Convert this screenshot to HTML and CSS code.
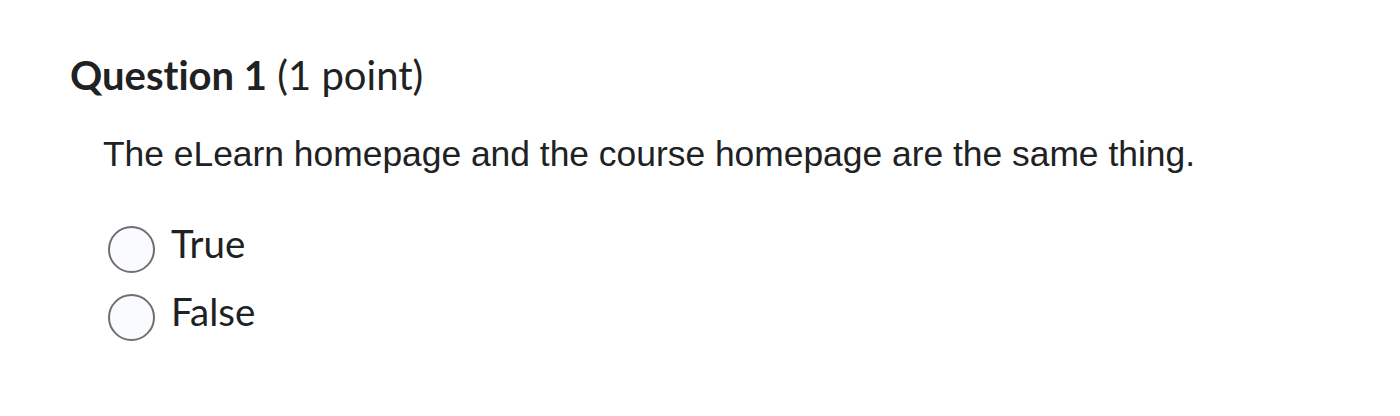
FILE: index.html
```html
<!DOCTYPE html>
<html>
<head>
<meta charset="utf-8">
<link rel="stylesheet" href="styles.css">
</head>
<body>
<div class="question">
  <h2 class="q-title"><span class="q-num">Question 1</span> <span class="q-pts">(1 point)</span></h2>
  <p class="q-text">The eLearn homepage and the course homepage are the same thing.</p>
  <div class="options">
    <label class="option"><span class="radio"></span><span class="opt-label">True</span></label>
    <label class="option"><span class="radio"></span><span class="opt-label">False</span></label>
  </div>
</div>
</body>
</html>
```
FILE: styles.css
```css
html, body {
  margin: 0;
  padding: 0;
  background: #ffffff;
}
.question {
  padding: 50px 0 0 70px;
  color: #202122;
  font-variant-ligatures: none;
}
.q-title {
  margin: 0;
  font-family: Lato, sans-serif;
  font-size: 40px;
  line-height: 50px;
  font-weight: 400;
}
.q-num {
  font-weight: 700;
}
.q-text {
  margin: 32px 0 0 33px;
  font-family: "Liberation Sans", Arial, sans-serif;
  font-size: 35.4px;
  line-height: 44px;
}
.options {
  margin: 43px 0 0 38px;
  display: flex;
  flex-direction: column;
  gap: 14px;
}
.option {
  display: flex;
  align-items: flex-start;
  gap: 16px;
}
.radio {
  width: 43px;
  height: 43px;
  margin-top: 7px;
  border: 2px solid #6f6f70;
  border-radius: 50%;
  background: #f9fbff;
  flex: none;
}
.opt-label {
  font-family: Lato, sans-serif;
  font-size: 38.5px;
  line-height: 48px;
}
```
